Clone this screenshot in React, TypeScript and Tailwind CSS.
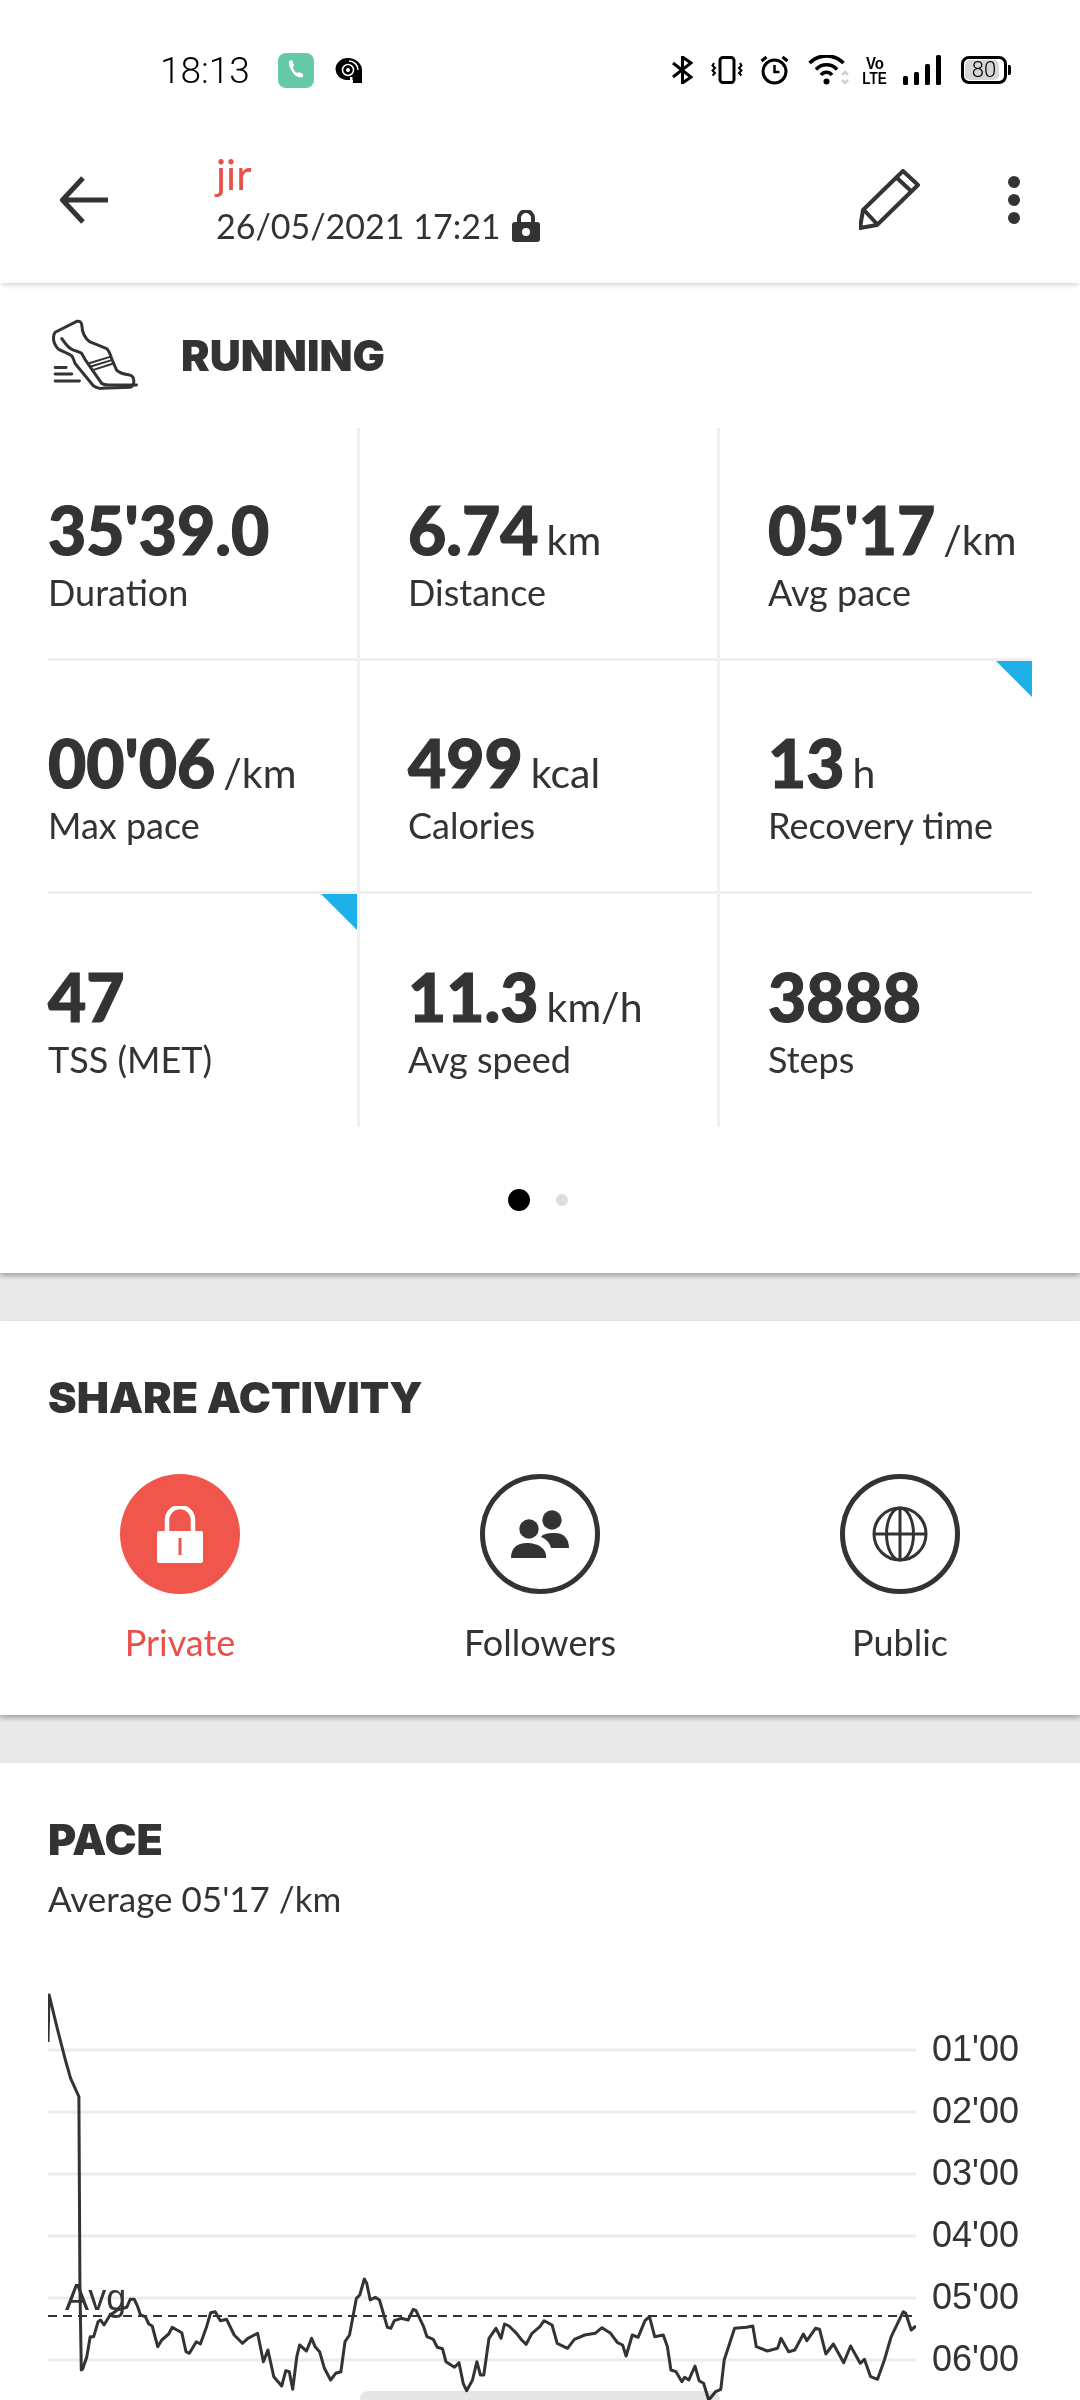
import React from "react";

const stats = [
  { value: "35'39.0", unit: "", label: "Duration" },
  { value: "6.74", unit: "km", label: "Distance" },
  { value: "05'17", unit: "/km", label: "Avg pace" },
  { value: "00'06", unit: "/km", label: "Max pace" },
  { value: "499", unit: "kcal", label: "Calories" },
  { value: "13", unit: "h", label: "Recovery time", flag: true },
  { value: "47", unit: "", label: "TSS (MET)", flag: true },
  { value: "11.3", unit: "km/h", label: "Avg speed" },
  { value: "3888", unit: "", label: "Steps" },
];

// trace read from the two chart crops (crop px -> page px below)
const leftTrace = [
  [143, 135], [165, 230], [190, 330], [205, 385], [229, 440], [232, 1000], [236, 1260], [240, 1258], [252, 1220], [262, 1160], [272, 1160],
  [285, 1115], [292, 1110], [302, 1125], [318, 1098], [340, 1080], [368, 1072], [378, 1048], [390, 1048], [400, 1070], [408, 1095], [422, 1100],
  [432, 1122], [442, 1128], [458, 1190], [470, 1170], [490, 1152], [500, 1132], [528, 1148], [540, 1205], [550, 1210], [570, 1175], [582, 1182],
  [600, 1130], [612, 1088], [625, 1085], [640, 1112], [658, 1108], [680, 1155], [704, 1180], [720, 1165], [748, 1150], [765, 1235], [778, 1200],
  [795, 1280], [818, 1308], [830, 1262], [840, 1265], [850, 1318], [862, 1220], [870, 1185], [890, 1203], [905, 1165], [915, 1190], [928, 1205],
  [942, 1255], [960, 1290], [975, 1270], [990, 1265], [1002, 1175], [1015, 1155], [1035, 1045], [1045, 1035], [1058, 987], [1065, 1000], [1075, 1050],
  [1090, 1042], [1102, 1050], [1125, 1132], [1135, 1135], [1145, 1112], [1165, 1105], [1185, 1110], [1200, 1078], [1208, 1082], [1230, 1130],
  [1240, 1160], [1258, 1168], [1270, 1192], [1285, 1196], [1295, 1235], [1320, 1252], [1333, 1238], [1345, 1300], [1355, 1322], [1372, 1290],
  [1385, 1235], [1395, 1275], [1405, 1275], [1420, 1165], [1440, 1135], [1455, 1165], [1465, 1122], [1478, 1128], [1500, 1150], [1515, 1170],
  [1528, 1183], [1545, 1150], [1568, 1130],
];
const rightTrace = [
  [12, 1112], [35, 1125], [50, 1180], [80, 1195], [100, 1168], [130, 1155], [160, 1150], [180, 1133], [205, 1150], [225, 1178], [240, 1185],
  [250, 1218], [268, 1155], [285, 1162], [305, 1112], [318, 1100], [333, 1160], [358, 1155], [370, 1190], [380, 1260], [395, 1265], [412, 1295],
  [420, 1282], [432, 1290], [450, 1248], [462, 1292], [475, 1300], [490, 1350], [510, 1325], [525, 1318], [535, 1230], [565, 1135], [600, 1132],
  [618, 1128], [628, 1190], [660, 1203], [690, 1195], [700, 1165], [722, 1205], [740, 1200], [765, 1152], [775, 1172], [800, 1135], [812, 1138],
  [830, 1212], [852, 1182], [882, 1238], [902, 1188], [930, 1240], [942, 1228], [960, 1280], [980, 1288], [1000, 1230], [1020, 1160], [1055, 1085],
  [1062, 1090], [1078, 1140], [1092, 1128],
];

const CHART_TOP = 1990;
const tracePoints = [
  "48,2042 49,1995",
  ...leftTrace.map(([x, y]) => `${(x / 2.904).toFixed(1)},${(1950 + y / 3).toFixed(1)}`),
  ...rightTrace.map(([x, y]) => `${(540 + x / 2.904).toFixed(1)},${(1950 + y / 3).toFixed(1)}`),
].join(" ");

const gridLines = [2050, 2112, 2174, 2236, 2298, 2360];
const paceLabels = ["01'00", "02'00", "03'00", "04'00", "05'00", "06'00"];

const StatusBar = () => (
  <div className="flex h-[140px] items-center pl-[160px] text-black">
    <span className="w-[118px] text-[37px] font-light leading-none font-['Roboto',sans-serif]">18:13</span>
    <div className="flex h-[35px] w-[36px] items-center justify-center rounded-[8px] bg-[#66c9a8]">
      <svg width="22" height="22" viewBox="0 0 22 22">
        <path d="M4 2c-1 4 3 12 7 15 2 1 5 2 7 1l0-3-4-2-2 1c-2-1-4-4-4-6l1-2-2-5z" fill="#fff" />
      </svg>
    </div>
    <svg className="ml-[21px] -mr-[1px]" width="28" height="25" viewBox="0 0 28 25">
      <path d="M13 0a14 12.500 0 0 1 14 13v12h-9v-3h-6A12 11 0 0 1 13 0z" fill="#000" />
      <circle cx="13" cy="12" r="5.500" fill="none" stroke="#fff" strokeWidth="1.500" />
      <circle cx="13" cy="12" r="2" fill="#fff" />
      <path d="M14 3a9 9 0 0 1 9 9" fill="none" stroke="#fff" strokeWidth="1.500" />
      <rect x="15" y="19" width="2.500" height="6" fill="#fff" />
    </svg>

    <div className="ml-[310px] flex items-center">
      <svg width="21" height="28" viewBox="0 0 21 28" fill="none" stroke="#000" strokeWidth="3">
        <path d="M1 7l18 14-8.500 6V1l8.500 6L1 21" />
      </svg>
      <svg className="ml-[18px]" width="32" height="28" viewBox="0 0 32 28" fill="none" stroke="#000">
        <rect x="9" y="1.500" width="14" height="25" rx="3" strokeWidth="3" />
        <path d="M3 7l-1.500 2.500L4 12l-2.500 2.500L4 17l-2.500 2.500M29 7l1.500 2.500L28 12l2.500 2.500L28 17l2.500 2.500" strokeWidth="2" />
      </svg>
      <svg className="ml-[17px]" width="29" height="30" viewBox="0 0 29 30" fill="none" stroke="#000">
        <circle cx="14.500" cy="16.500" r="11.500" strokeWidth="3" />
        <path d="M14.500 10v7h5" strokeWidth="2.500" />
        <path d="M1.500 6l5-4M27.500 6l-5-4" strokeWidth="3" />
      </svg>
      <svg className="ml-[19px]" width="41" height="30" viewBox="0 0 41 30" fill="none" stroke="#000" strokeWidth="3.500">
        <path d="M1.500 8a24 24 0 0 1 34 0M8 14.500a14 14 0 0 1 21 0M13 20a7 7 0 0 1 11 0" />
        <circle cx="18.500" cy="26.500" r="3" fill="#000" stroke="none" />
        <path d="M34 20l3-3 3 3M34 25l3 3 3-3" stroke="#d0d0d0" strokeWidth="2.500" />
      </svg>
      <div className="ml-[14px] flex w-[24px] flex-col items-center font-['Liberation_Sans',sans-serif] text-[15px] leading-[15px] font-bold text-black">
        <span className="scale-y-110">Vo</span>
        <span className="scale-x-90 scale-y-110">LTE</span>
      </div>
      <svg className="ml-[16px]" width="38" height="30" viewBox="0 0 38 30" fill="#000">
        <rect x="0" y="21" width="5" height="9" rx="1.500" />
        <rect x="11" y="17" width="5" height="13" rx="1.500" />
        <rect x="22" y="9" width="5" height="21" rx="1.500" />
        <rect x="33" y="0" width="5" height="30" rx="1.500" />
      </svg>
      <div className="relative ml-[20px] flex h-[28px] w-[46px] items-center justify-center rounded-[8px] border-[3px] border-black">
        <div className="absolute inset-[1px] right-[5px] rounded-[5px] bg-[#d6d6d6]" />
        <span className="relative font-['Roboto',sans-serif] text-[22px] leading-none font-light text-black">80</span>
      </div>
      <div className="ml-[1px] h-[10px] w-[3px] rounded-r-[2px] bg-black" />
    </div>
  </div>
);

const Header = () => (
  <div className="relative z-10 h-[143px] bg-white pl-[60px] shadow-[0_4px_5px_-2px_rgba(0,0,0,0.18)]">
    <div className="flex h-[120px] items-center">
      <svg width="48" height="48" viewBox="0 0 48 48" fill="none" stroke="#333" strokeWidth="5">
        <path d="M23 2L2.500 24 23 46M3 24h45" />
      </svg>
      <div className="ml-[108px] flex flex-col text-[34px] leading-[48px]">
        <span className="text-[42px] leading-[46px] text-[#e9504a]">jir</span>
        <span className="mt-[5px] flex items-center text-[#333]">
          26/05/2021 17:21
          <svg className="ml-[11px]" width="28" height="32" viewBox="0 0 28 32">
            <path d="M7 13V8a7 7 0 0 1 14 0v5" fill="none" stroke="#333" strokeWidth="4" />
            <rect y="12" width="28" height="20" rx="3" fill="#333" />
            <circle cx="14" cy="22" r="4" fill="#fff" />
          </svg>
        </span>
      </div>
      <svg className="ml-auto" width="62" height="62" viewBox="0 0 62 62" fill="none" stroke="#333" strokeWidth="4" strokeLinejoin="round">
        <path d="M4 41L44 2l15 14-41 40-17 3zM38 9l14 13M5 41l13 14" />
      </svg>
      <svg className="ml-[87px] mr-[60px]" width="12" height="48" viewBox="0 0 12 48" fill="#333">
        <circle cx="6" cy="6" r="6" />
        <circle cx="6" cy="24" r="6" />
        <circle cx="6" cy="42" r="6" />
      </svg>
    </div>
  </div>
);

const ShoeIcon = () => (
  <svg width="90" height="78" viewBox="60 45 270 235" fill="none" stroke="#333" strokeWidth="9" strokeLinejoin="round" strokeLinecap="round">
    <path d="M75 197h33M75 217h50M75 238h73" />
    <path d="M140 58c8-2 14 2 15 10 1 22 10 42 25 52l50 20c8 8 12 20 15 30l15 35c10 10 25 13 40 15 10 3 12 10 12 18 0 12-5 18-12 19l-85 3c-10 1-18-3-25-8l-55-67c-4-10-6-19-10-23-8-7-32-15-40-20-10-10-16-20-15-36 1-10 3-13 5-15z" />
    <path d="M95 110c10 15 22 30 35 35 15 5 22 6 25 10 5 8 10 20 15 25l45 65c5 3 12 5 20 5h85" />
    <path d="M175 185l65-20M180 195l65-20M188 205l62-20" strokeWidth="6" />
  </svg>
);

const StatCell = ({ stat, index }: { stat: (typeof stats)[number]; index: number }) => {
  const lastCol = index % 3 === 2;
  const lastRow = index >= 6;
  return (
    <div
      className={`relative flex h-[233px] flex-col justify-center pt-[20px] ${index % 3 === 0 ? "" : "pl-[48px]"} ${
        lastCol ? "" : "border-r-[3px] border-[#efefef]"
      } ${lastRow ? "" : "border-b-[3px] border-b-[#efefef]"}`}
    >
      {stat.flag && (
        <svg className="absolute right-0 top-0" width="36" height="36" viewBox="0 0 36 36">
          <polygon points="0,0 36,0 36,36" fill="#1eb0e8" />
        </svg>
      )}
      <div className="flex h-[70px] items-baseline text-[#333]">
        <span className="text-[66px] leading-[70px] font-black [-webkit-text-stroke:1.2px_#333]">{stat.value}</span>
        {stat.unit && <span className="ml-[8px] text-[41px] leading-none">{stat.unit}</span>}
      </div>
      <div className="mt-[7px] text-[36px] leading-[40px] text-[#333]">{stat.label}</div>
    </div>
  );
};

const ShareOption = ({ label, active, children }: { label: string; active?: boolean; children: React.ReactNode }) => (
  <div className="flex flex-col items-center">
    <div
      className={`flex h-[120px] w-[120px] items-center justify-center rounded-full ${
        active ? "bg-[#f0564c]" : "border-[5px] border-[#333]"
      }`}
    >
      {children}
    </div>
    <span className={`mt-[28px] text-[36px] leading-[40px] ${active ? "text-[#e9504a]" : "text-[#333]"}`}>{label}</span>
  </div>
);

export default function App() {
  return (
    <div className="relative h-[2400px] w-[1080px] overflow-hidden bg-white font-['Lato',sans-serif]">
      <StatusBar />
      <Header />

      <div className="relative z-[5] h-[990px] bg-white shadow-[0_3px_5px_rgba(0,0,0,0.3)]">
        <div className="flex h-[145px] items-center pl-[50px]">
          <ShoeIcon />
          <span className="ml-[41px] font-['Inter',sans-serif] text-[43px] leading-none font-black text-[#333]">RUNNING</span>
        </div>

        <div className="ml-[48px] grid w-[984px] grid-cols-[312px_360px_312px]">
          {stats.map((stat, i) => (
            <StatCell key={stat.label} stat={stat} index={i} />
          ))}
        </div>

        <div className="mt-[62px] flex items-center justify-center gap-[26px] pr-[5px]">
          <div className="h-[22px] w-[22px] rounded-full bg-black" />
          <div className="h-[12px] w-[12px] rounded-full bg-[#dddddd]" />
        </div>
      </div>

      <div className="h-[48px] bg-[#e9e9e9]" />

      <div className="relative z-[5] h-[394px] bg-white shadow-[0_3px_5px_rgba(0,0,0,0.3)]">
        <div className="flex h-[153px] items-center pl-[48px]">
          <h2 className="font-['Inter',sans-serif] text-[43px] leading-none font-black text-[#333]">SHARE ACTIVITY</h2>
        </div>
        <div className="grid grid-cols-3">
          <ShareOption label="Private" active>
            <svg width="46" height="57" viewBox="0 0 46 57">
              <path d="M10 27V14a13 13 0 0 1 26 0v13" fill="none" stroke="#fff" strokeWidth="4.500" />
              <rect y="25" width="46" height="32" rx="2" fill="#fff" />
              <rect x="21.500" y="32" width="3" height="17" fill="#f0564c" />
            </svg>
          </ShareOption>
          <ShareOption label="Followers">
            <svg width="60" height="48" viewBox="0 0 60 48" fill="#333">
              <circle cx="19" cy="19" r="9.700" />
              <circle cx="42" cy="10" r="9.700" />
              <path d="M1 48c0-10 6-15 16-15s20 5 19 15z" />
              <path d="M31 27c2-3 6-4 14-4 9 0 14 6 14 15H41c-1-5-5-9-10-11z" />
            </svg>
          </ShareOption>
          <ShareOption label="Public">
            <svg width="56" height="56" viewBox="0 0 56 56" fill="none" stroke="#333" strokeWidth="3">
              <circle cx="28" cy="28" r="26" />
              <ellipse cx="28" cy="28" rx="13.500" ry="26" />
              <path d="M28 2v52M2 28h52" />
            </svg>
          </ShareOption>
        </div>
      </div>

      <div className="h-[48px] bg-[#e9e9e9]" />

      <div className="bg-white pl-[48px] pt-[57px]">
        <h2 className="font-['Inter',sans-serif] text-[43px] leading-[38px] font-black text-[#333]">PACE</h2>
        <p className="mt-[20px] text-[35px] leading-[40px] text-[#333]">Average 05'17 /km</p>

        {/* chart: svg lines plus a label column in flow */}
        <div className="relative mt-[72px] flex h-[410px] font-['Liberation_Sans',sans-serif]">
          <svg width="868" height="410" viewBox={`48 ${CHART_TOP} 868 410`} className="shrink-0">
            {gridLines.map((y) => (
              <line key={y} x1="48" x2="916" y1={y} y2={y} stroke="#ececec" strokeWidth="3" />
            ))}
            <line x1="48" x2="916" y1="2316" y2="2316" stroke="#333" strokeWidth="2" strokeDasharray="9 6" />
            <polyline points={tracePoints} fill="none" stroke="#333" strokeWidth="3" strokeLinejoin="round" />
          </svg>
          <div className="ml-[16px] flex flex-col pt-[28px] text-[36px] leading-[62px] text-[#333]">
            {paceLabels.map((l) => (
              <span key={l}>{l}</span>
            ))}
          </div>
          <span className="absolute left-[17px] top-[288px] text-[36px] leading-[40px] text-[#333]">Avg</span>
        </div>
      </div>

      <div className="absolute bottom-0 left-[360px] h-[9px] w-[360px] rounded-t-[8px] bg-[#e5e5e5] mix-blend-multiply" />
    </div>
  );
}
